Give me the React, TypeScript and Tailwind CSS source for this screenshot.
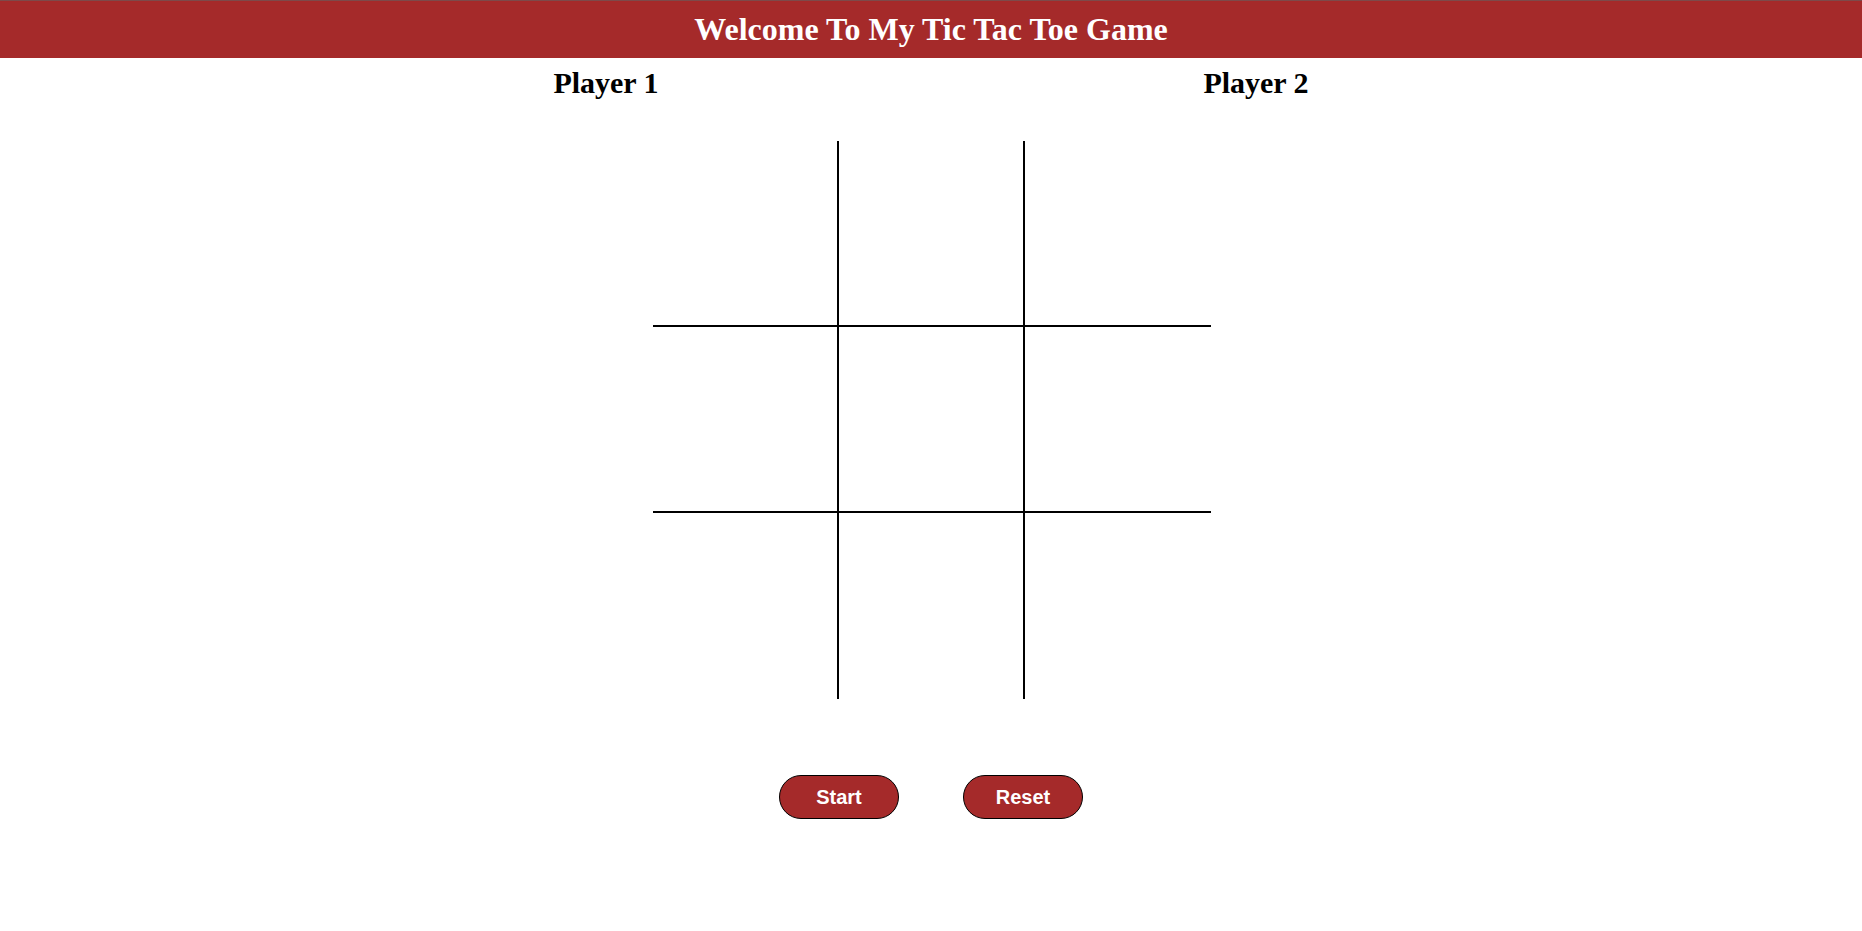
import { useState } from 'react';

const serif = { fontFamily: '"Liberation Serif", "Times New Roman", serif' };
const sans = { fontFamily: '"Liberation Sans", Arial, sans-serif' };

export default function App() {
  const [cells, setCells] = useState<string[]>(Array(9).fill(''));
  const [turn, setTurn] = useState<'X' | 'O'>('X');
  const [started, setStarted] = useState(false);

  const play = (i: number) => {
    if (!started || cells[i]) return;
    const next = [...cells];
    next[i] = turn;
    setCells(next);
    setTurn(turn === 'X' ? 'O' : 'X');
  };

  const reset = () => {
    setCells(Array(9).fill(''));
    setTurn('X');
    setStarted(false);
  };

  return (
    <div className="min-h-screen bg-white" style={serif}>
      <header className="border-t border-[#7d4a4a] bg-[#a52a2a] h-[58px] flex items-start justify-center">
        <h1 className="mt-[10px] text-[32px] font-bold text-white leading-[37px]">Welcome To My Tic Tac Toe Game</h1>
      </header>

      <div className="flex justify-center mt-[7px]">
        <h2 className="w-[650px] text-center text-[30px] font-bold text-black leading-[35px]">Player 1</h2>
        <h2 className="w-[650px] text-center text-[30px] font-bold text-black leading-[35px]">Player 2</h2>
      </div>

      <div className="flex justify-center mt-[41px] pl-[1px]">
        <div className="grid grid-cols-3">
          {cells.map((c, i) => (
            <div
              key={i}
              onClick={() => play(i)}
              className={
                'w-[186px] h-[186px] flex items-center justify-center text-[96px] border-black ' +
                (i % 3 < 2 ? 'border-r-2 ' : '') +
                (i < 6 ? 'border-b-2' : '')
              }
            >
              {c}
            </div>
          ))}
        </div>
      </div>

      <div className="flex justify-center gap-[64px] mt-[76px]" style={sans}>
        <button
          onClick={() => setStarted(true)}
          className="w-[120px] h-[44px] rounded-full border border-black bg-[#a52a2a] text-white text-[20px] font-bold"
        >
          Start
        </button>
        <button
          onClick={reset}
          className="w-[120px] h-[44px] rounded-full border border-black bg-[#a52a2a] text-white text-[20px] font-bold"
        >
          Reset
        </button>
      </div>
    </div>
  );
}
